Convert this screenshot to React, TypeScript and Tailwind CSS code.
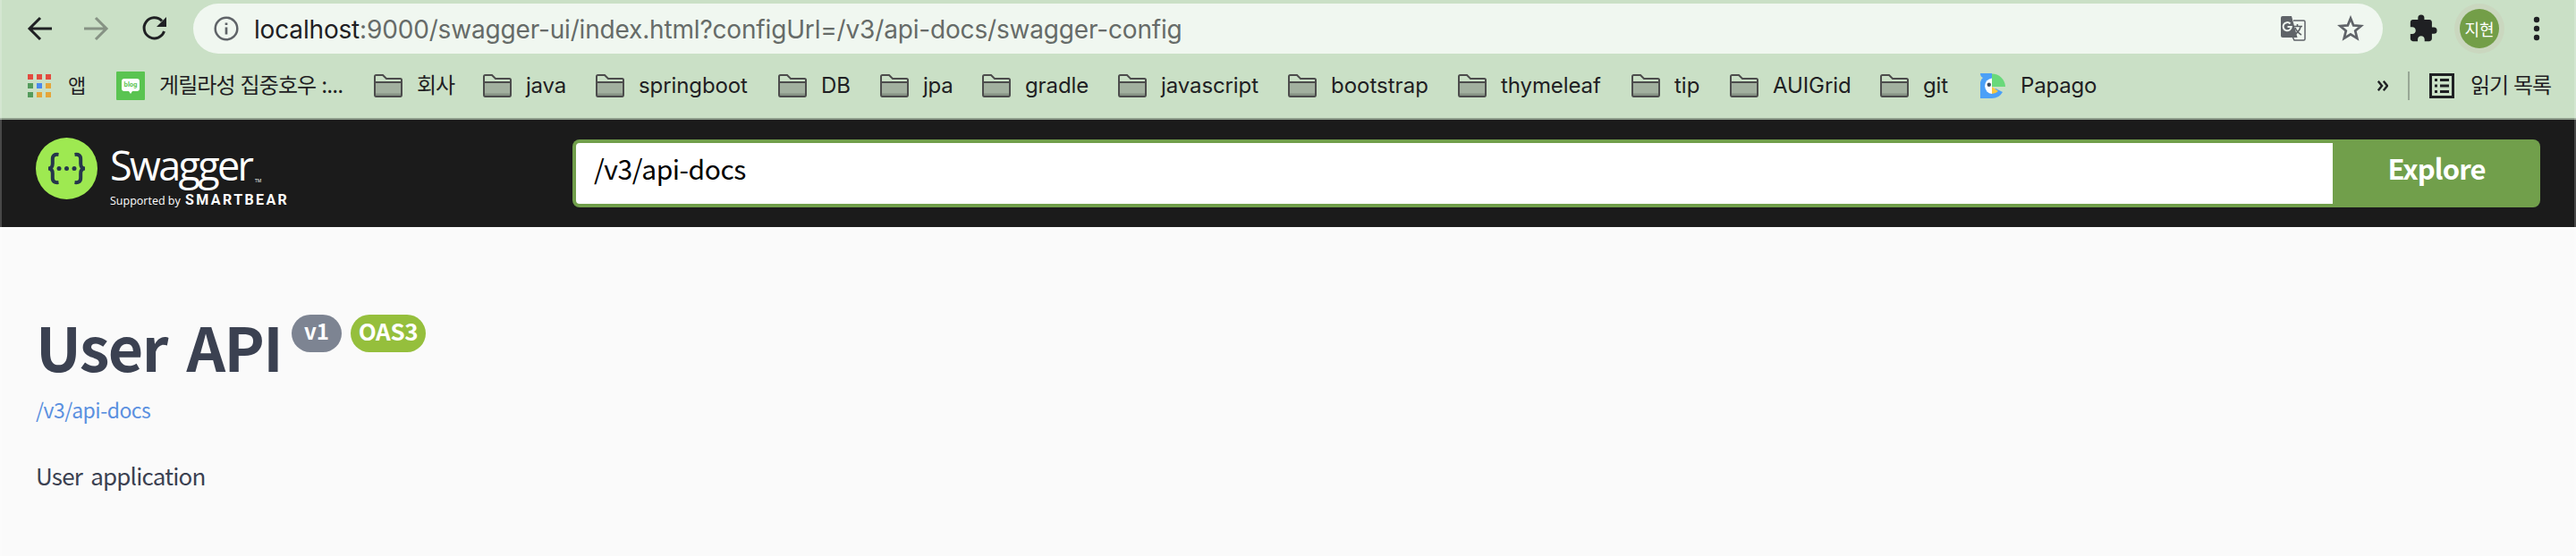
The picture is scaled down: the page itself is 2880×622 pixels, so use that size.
import React from "react";

const bookmarks = [
  { label: "회사", width: "w-[122px]", tracking: "tracking-[-1px]" },
  { label: "java", width: "w-[126px]", tracking: "tracking-[-0.2px]" },
  { label: "springboot", width: "w-[204px]", tracking: "tracking-[-0.1px]" },
  { label: "DB", width: "w-[114px]", tracking: "tracking-normal" },
  { label: "jpa", width: "w-[114px]", tracking: "tracking-[-0.2px]" },
  { label: "gradle", width: "w-[152px]", tracking: "tracking-[-0.1px]" },
  { label: "javascript", width: "w-[190px]", tracking: "tracking-[-0.1px]" },
  { label: "bootstrap", width: "w-[190px]", tracking: "tracking-normal" },
  { label: "thymeleaf", width: "w-[194px]", tracking: "tracking-[-0.1px]" },
  { label: "tip", width: "w-[110px]", tracking: "tracking-normal" },
  { label: "AUIGrid", width: "w-[168px]", tracking: "tracking-[-0.1px]" },
  { label: "git", width: "w-[112px]", tracking: "tracking-[-0.2px]" },
];

const appColors = ["#e34b3f", "#e34b3f", "#e34b3f", "#549b5c", "#4a89ee", "#e5a53a", "#549b5c", "#e5a53a", "#e5a53a"];

function FolderIcon() {
  return (
    <svg className="h-[26px] w-8 shrink-0" viewBox="0 0 32 26" fill="none">
      <path d="M1 23V2.5Q1 1 2.500 1H10L14 5H29.500Q31 5 31 6.500V23Q31 25 29.500 25H2.500Q1 25 1 23Z" fill="#cae0c6" />
      <path d="M1 9H31V24H1Z" fill="#a2b09f" />
      <path d="M2 21.500H30V24H2Z" fill="#869284" />
      <path d="M1 23V2.500Q1 1 2.500 1H10L14 5H29.500Q31 5 31 6.500V23Q31 25 29.500 25H2.500Q1 25 1 23ZM1 9H31" stroke="#4c4c4c" strokeWidth="2" />
    </svg>
  );
}

function Toolbar() {
  return (
    <div className="flex h-16 items-center">
      <svg className="ml-[30px] h-7 w-7" viewBox="0 0 28 28" fill="none" stroke="#1f2023" strokeWidth="3">
        <path d="M28 14H3M15 2L3 14L15 26" />
      </svg>
      <svg className="ml-9 h-7 w-7" viewBox="0 0 28 28" fill="none" stroke="#869284" strokeWidth="3">
        <path d="M0 14H25M13 2L25 14L13 26" />
      </svg>
      <svg className="ml-9 h-7 w-7" viewBox="0 0 28 28" fill="none">
        <path d="M23 5.500A11.500 11.500 0 1 0 25.500 17" stroke="#1f2023" strokeWidth="3" />
        <path d="M28 1V12H17Z" fill="#1f2023" />
      </svg>
      <div className="ml-[30px] flex h-14 w-[2448px] items-center rounded-full bg-[#f0f7f0]">
        <svg className="ml-[23px] h-7 w-7" viewBox="0 0 28 28" fill="none" stroke="#5f6368">
          <circle cx="14" cy="14" r="12.300" strokeWidth="2.500" />
          <path d="M14 12.500V20.500M14 7.500V10" strokeWidth="2.700" />
        </svg>
        <div className="ml-[17px] whitespace-nowrap pt-px font-['Inter',sans-serif] text-[28px] leading-8 tracking-[-0.17px] text-[#666b68]">
          <span className="text-[#1f2023]">localhost</span>:9000/swagger-ui/index.html?configUrl=/v3/api-docs/swagger-config
        </div>
        <svg className="ml-auto h-7 w-7" viewBox="0 0 28 28" fill="none">
          <path d="M14 5H25.500Q27 5 27 6.500V25.500Q27 27 25.500 27H15L13 23" stroke="#5f6368" strokeWidth="1.500" />
          <path d="M14 11.500H24M18.500 9V11.500M22 12Q21 17 15 21M16 13Q18 18 23 21" stroke="#5f6368" strokeWidth="1.600" />
          <path d="M2 0H12L18.500 24H2Q0 24 0 22V2Q0 0 2 0Z" fill="#5f6368" />
          <path d="M10.500 8.500A4.600 4.600 0 1 0 11.800 12H7.500" stroke="#f0f7f0" strokeWidth="2" />
        </svg>
        <svg className="ml-[35px] mr-[21px] h-[30px] w-[30px]" viewBox="0 0 30 30" fill="none">
          <path d="M15 3.500L18.200 11.400L26.700 12L20.200 17.500L22.300 25.800L15 21.300L7.700 25.800L9.800 17.500L3.300 12L11.800 11.400Z" stroke="#5f6368" strokeWidth="2.700" />
        </svg>
      </div>
      <svg className="ml-[28px] h-[34px] w-[34px]" viewBox="0 0 24 24" fill="#1f2023">
        <path d="M20.500 11H19V7c0-1.100-.9-2-2-2h-4V3.500a2.500 2.500 0 0 0-5 0V5H4c-1.100 0-2 .9-2 2v3.800h1.500c1.500 0 2.700 1.200 2.700 2.700s-1.200 2.700-2.700 2.700H2V20c0 1.100.9 2 2 2h3.800v-1.500c0-1.500 1.200-2.700 2.700-2.700s2.700 1.200 2.700 2.700V22H17c1.100 0 2-.9 2-2v-4h1.500a2.500 2.500 0 0 0 0-5z" />
      </svg>
      <div className="ml-[18px] flex h-14 w-14 items-center justify-center rounded-full bg-[#cad7bf]">
        <div className="flex h-11 w-11 items-center justify-center rounded-full bg-[#739e48] font-['Noto_Sans_CJK_KR',sans-serif] text-[18px] leading-none text-white">
          지현
        </div>
      </div>
      <svg className="ml-[32px] h-7 w-2" viewBox="0 0 8 28" fill="#1f2023">
        <circle cx="4" cy="4" r="3.200" />
        <circle cx="4" cy="14" r="3.200" />
        <circle cx="4" cy="24" r="3.200" />
      </svg>
    </div>
  );
}

function BookmarkBar() {
  return (
    <div className="flex h-[64px] items-center whitespace-nowrap font-['Inter','Noto_Sans_CJK_KR',sans-serif] text-2xl leading-8 text-[#1f2023]">
      <div className="ml-[31px] grid w-[45px] grid-cols-[6px_6px_6px] gap-[4px]">
        {appColors.map((c, i) => (
          <span key={i} className="h-1.5 w-1.5" style={{ backgroundColor: c }} />
        ))}
      </div>
      <div className="w-[54px] text-[22px]">앱</div>
      <svg className="h-8 w-8" viewBox="0 0 32 32">
        <rect width="32" height="32" rx="1" fill="#5ac451" />
        <path d="M9 8H23Q26 8 26 11V19Q26 22 23 22H18L16 25L14 22H9Q6 22 6 19V11Q6 8 9 8Z" fill="#fff" />
        <text x="16" y="17" textAnchor="middle" fontSize="7" fontWeight="700" fontFamily="Inter" fill="#5ac451">blog</text>
      </svg>
      <div className="ml-4 w-[240px] tracking-[-0.9px]">게릴라성 집중호우 :...</div>
      {bookmarks.map((b) => (
        <div key={b.label} className={"flex shrink-0 items-center gap-4 " + b.width}>
          <FolderIcon />
          <span className={b.tracking}>{b.label}</span>
        </div>
      ))}
      <svg className="h-7 w-7" viewBox="0 0 28 28">
        <path d="M0 0H13V28H0V10Q1 6 3 5Q0 4 0 0Z" fill="#4ba0f7" />
        <path d="M13 28Q21 28 25 21L17 17L13 20Z" fill="#4ba0f7" />
        <path d="M13 0.500A15 15 0 0 1 28 15H13Z" fill="#69d97a" />
        <path d="M13 5.500A8.800 8.800 0 0 0 13 23Z" fill="#fff" />
        <path d="M13 15L20 20Q17 23 13 23Z" fill="#f8c840" />
        <circle cx="9.800" cy="12.800" r="2.200" fill="#3e4a5c" />
      </svg>
      <span className="ml-[17px] tracking-[-0.2px]">Papago</span>
      <svg className="ml-auto h-3 w-3" viewBox="0 0 12 12" fill="none" stroke="#1f2023" strokeWidth="2.400">
        <path d="M0.800 0.800L5 6L0.800 11.200M6.800 0.800L11 6L6.800 11.200" />
      </svg>
      <div className="ml-[22px] h-8 w-0.5 bg-[#97a795]" />
      <svg className="ml-[22px] h-7 w-7" viewBox="0 0 28 28" fill="none" stroke="#1f2023">
        <rect x="1.500" y="1.500" width="25" height="25" strokeWidth="3" />
        <path d="M6 7.500H9M12 7.500H22M6 14H9M12 14H22M6 20.500H9M12 20.500H22" strokeWidth="2.800" />
      </svg>
      <span className="ml-[18px] mr-[27px] w-[91px] tracking-[-1px]">읽기 목록</span>
    </div>
  );
}

function SwaggerLogo() {
  return (
    <div className="flex w-[600px]">
      <svg className="-mt-0.5 h-[69px] w-[69px]" viewBox="0 0 69 69" fill="none">
        <circle cx="34.500" cy="34.500" r="34.500" fill="#9ee951" />
        <path d="M25.500 19Q18.500 18 18.800 24.500V29Q18.800 34.500 14 34.500Q18.800 34.500 18.800 40V44.500Q18.500 51 25.500 50M43.500 19Q50.500 18 50.200 24.500V29Q50.200 34.500 55 34.500Q50.200 34.500 50.200 40V44.500Q50.500 51 43.500 50" stroke="#25364c" strokeWidth="4" />
        <circle cx="26" cy="34.500" r="2.500" fill="#25364c" />
        <circle cx="34.500" cy="34.500" r="2.500" fill="#25364c" />
        <circle cx="43" cy="34.500" r="2.500" fill="#25364c" />
      </svg>
      <div className="ml-[14px] flex flex-col whitespace-nowrap text-white">
        <div className="flex h-[58px] items-end font-['Open_Sans',sans-serif] leading-[58px]">
          <span className="w-[162px] text-[45px] tracking-[-2.7px]">Swagger</span>
          <span className="text-[5px] leading-6">TM</span>
        </div>
        <div className="flex items-baseline leading-5">
          <span className="w-[84px] font-['Open_Sans',sans-serif] text-[12.500px]">Supported by</span>
          <span className="font-['Roboto',sans-serif] text-[16px] font-bold tracking-[2.400px]">SMARTBEAR</span>
        </div>
      </div>
    </div>
  );
}

export default function App() {
  return (
    <div className="relative h-[622px] w-[2880px] overflow-hidden bg-[#fafafa] font-['Noto_Sans_CJK_KR',sans-serif]">
      <header className="h-[134px] border-b-2 border-[#8d9d8b] bg-[#cae0c6]">
        <Toolbar />
        <BookmarkBar />
      </header>
      <div className="flex h-[120px] items-start bg-[#1b1b1b] px-10 pt-[22px]">
        <SwaggerLogo />
        <div className="flex h-[76px] w-[2200px] rounded-lg bg-[#719f4b]">
          <div className="my-1 ml-1 w-[1964px] rounded-l bg-white pl-5 text-[30px] leading-[56px] tracking-[-0.45px] text-black">/v3/api-docs</div>
          <div className="grow text-center text-[31px] font-bold leading-[63px] tracking-[-0.9px] text-white">Explore</div>
        </div>
      </div>
      <main className="px-10 text-[#3b4151]">
        <div className="flex items-start pt-[98px]">
          <h1 className="w-[286px] whitespace-nowrap text-[68px] font-bold leading-[70px] tracking-[-1.6px] [word-spacing:8px]">User API</h1>
          <span className="h-[42px] w-14 rounded-full bg-[#7d8492] text-center text-2xl font-bold leading-[36px] text-white">v1</span>
          <span className="ml-2.5 h-[42px] w-[84px] rounded-full bg-[#95bf3c] text-center text-[26px] font-bold leading-[36px] tracking-[-0.3px] text-white">OAS3</span>
        </div>
        <div className="mt-5 text-[23px] leading-8 tracking-[-0.5px] text-[#5a90e0]">/v3/api-docs</div>
        <p className="mt-[42px] text-[26px] leading-8 tracking-[-0.8px] [word-spacing:4px]">User application</p>
      </main>
      <div className="absolute left-0 top-0 h-full w-0.5 bg-white/20" />
      <div className="absolute right-0 top-0 h-full w-0.5 bg-white/20" />
    </div>
  );
}
